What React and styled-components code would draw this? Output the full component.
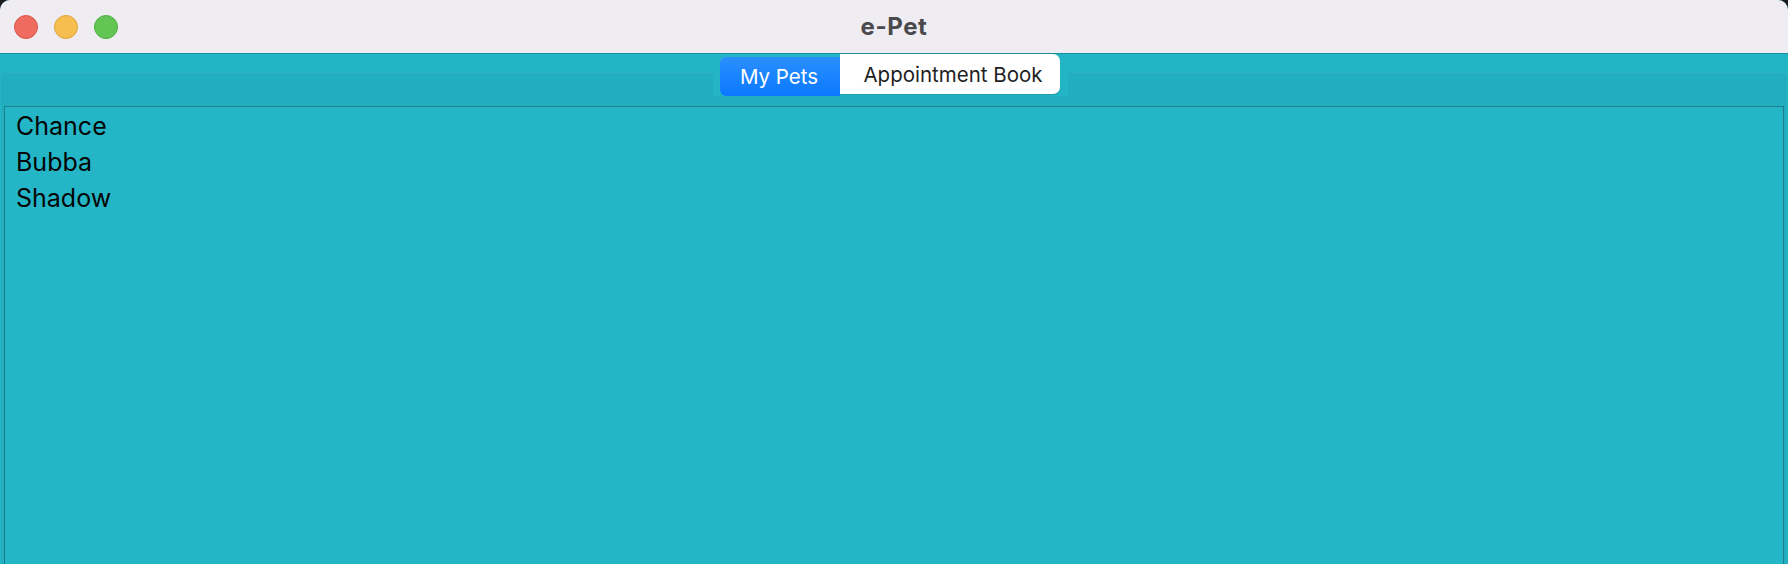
import React from "react";
import styled, { createGlobalStyle } from "styled-components";

const GlobalStyle = createGlobalStyle`
  html, body {
    margin: 0;
    padding: 0;
    background: #1c1c1e;
  }
  #root {
    height: 100vh;
  }
`;

const Window = styled.div`
  height: 100vh;
  display: flex;
  flex-direction: column;
  border-radius: 10px 10px 0 0;
  overflow: hidden;
  background: #23b5c6;
  font-family: Inter, "Liberation Sans", sans-serif;
`;

const TitleBar = styled.div`
  height: 53px;
  flex: none;
  display: grid;
  grid-template-columns: 1fr auto 1fr;
  align-items: center;
  background: #efecf2;
  border-bottom: 1px solid #1890a0;
`;

const Lights = styled.div`
  display: flex;
  gap: 16px;
  padding-left: 14px;
`;

const Light = styled.span`
  width: 24px;
  height: 24px;
  box-sizing: border-box;
  border-radius: 50%;
  background: ${(p) => p.$color};
  border: 1px solid ${(p) => p.$edge};
`;

const Title = styled.div`
  font-size: 24px;
  font-weight: 700;
  color: #4a494d;
  letter-spacing: 0.6px;
`;

const Body = styled.div`
  flex: 1;
  display: flex;
  flex-direction: column;
`;

const TabStrip = styled.div`
  height: 42px;
  display: flex;
  justify-content: center;
  padding-right: 7px;
  position: relative;
  z-index: 1;
`;

const TabWell = styled.div`
  display: flex;
  align-items: flex-start;
  padding: 0 8px 0 7px;
  background: #23b5c6;
`;

const Segment = styled.div`
  box-sizing: border-box;
  display: flex;
  align-items: center;
  justify-content: center;
  font-size: 20.5px;
  white-space: nowrap;
`;

const ActiveSegment = styled(Segment)`
  width: 120px;
  height: 39px;
  margin-top: 3px;
  padding-right: 2px;
  border-radius: 6px 0 0 6px;
  color: #ffffff;
  background: linear-gradient(#2b8ffe, #0a79ff);
`;

const PlainSegment = styled(Segment)`
  width: 220px;
  height: 40px;
  padding-left: 6px;
  border-radius: 0 7px 7px 0;
  color: #1f1f1f;
  background: #ffffff;
  box-shadow: 0 1px 1px rgba(0, 0, 0, 0.15);
`;

const Panel = styled.div`
  flex: 1;
  display: flex;
  margin: -24px 1px 0;
  padding: 34px 3px 0;
  border-radius: 7px 7px 0 0;
  background: #21aebf;
  box-shadow: inset 0 1px 0 rgba(255, 255, 255, 0.06);
`;

const List = styled.ul`
  flex: 1;
  margin: 0;
  padding: 1px 0 0 11px;
  list-style: none;
  background: #24b6c7;
  border: 1px solid #1b7e8a;
  border-bottom: none;
`;

const Item = styled.li`
  font-size: 25px;
  line-height: 36px;
  color: #050505;
`;

const pets = ["Chance", "Bubba", "Shadow"];

export default function App() {
  return (
    <>
      <GlobalStyle />
      <Window>
        <TitleBar>
          <Lights>
            <Light $color="#ef6a5f" $edge="#d9574d" />
            <Light $color="#f6be4f" $edge="#dea53c" />
            <Light $color="#62c554" $edge="#4faf43" />
          </Lights>
          <Title>e-Pet</Title>
          <div />
        </TitleBar>
        <Body>
          <TabStrip>
            <TabWell>
              <ActiveSegment>My Pets</ActiveSegment>
              <PlainSegment>Appointment Book</PlainSegment>
            </TabWell>
          </TabStrip>
          <Panel>
            <List>
              {pets.map((name) => (
                <Item key={name}>{name}</Item>
              ))}
            </List>
          </Panel>
        </Body>
      </Window>
    </>
  );
}
